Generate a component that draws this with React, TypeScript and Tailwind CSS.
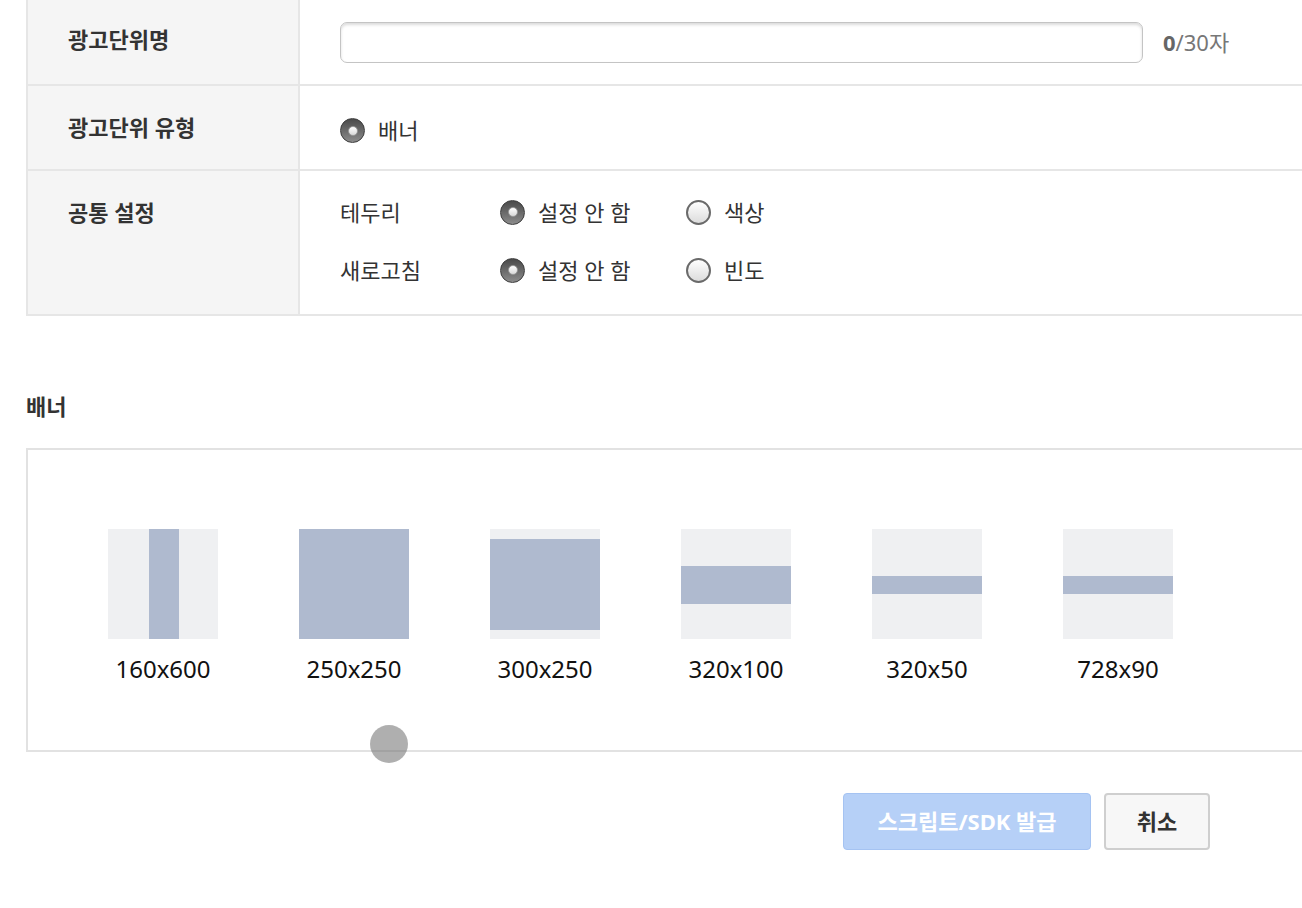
import React from 'react';

const FONT = "font-['Noto_Sans','Noto_Sans_CJK_KR',sans-serif]";

type Size = { label: string; w: number; h: number; x: number; y: number };

// thumbnail geometry inside a 110x110 box
const sizes: Size[] = [
  { label: '160x600', w: 30, h: 110, x: 41, y: 0 },
  { label: '250x250', w: 110, h: 110, x: 0, y: 0 },
  { label: '300x250', w: 110, h: 91, x: 0, y: 10 },
  { label: '320x100', w: 110, h: 38, x: 0, y: 37 },
  { label: '320x50', w: 110, h: 18, x: 0, y: 47 },
  { label: '728x90', w: 110, h: 18, x: 0, y: 47 },
];

function Radio({ checked }: { checked: boolean }) {
  if (checked) {
    return (
      <span className="flex h-[25px] w-[25px] shrink-0 items-center justify-center rounded-full border border-[#3c3c3c] bg-gradient-to-b from-[#4a4a4a] to-[#8c8c8c]">
        <span className="h-[10px] w-[10px] rounded-full border border-[#9a9a9a] bg-gradient-to-b from-[#ffffff] to-[#d8d8d8]" />
      </span>
    );
  }
  return (
    <span className="h-[25px] w-[25px] shrink-0 rounded-full border-2 border-[#6a6a6a] bg-gradient-to-b from-[#ffffff] to-[#dcdcdc]" />
  );
}

function Option({ checked, label, className }: { checked: boolean; label: string; className?: string }) {
  return (
    <label className={`flex items-center gap-[13px] ${className ?? ''}`}>
      <Radio checked={checked} />
      <span className="text-[22px] text-[#333]">{label}</span>
    </label>
  );
}

function Thumb({ s }: { s: Size }) {
  return (
    <div className="flex w-[110px] flex-col items-center">
      <div className="relative h-[110px] w-[110px] bg-[#eff0f2]">
        <div
          className="absolute bg-[#afbacf]"
          style={{ left: s.x, top: s.y, width: s.w, height: s.h }}
        />
      </div>
      <div className="mt-[16px] whitespace-nowrap text-[24px] leading-[28px] text-[#111]">{s.label}</div>
    </div>
  );
}

export default function App() {
  return (
    <div className={`relative h-[908px] w-[1302px] overflow-hidden bg-white ${FONT}`}>
      {/* settings table */}
      <div className="ml-[26px] w-[1320px] border-l-2 border-[#e6e6e6]">
        <div className="flex h-[86px] border-b-2 border-[#e6e6e6]">
          <div className="w-[272px] shrink-0 border-r-2 border-[#e6e6e6] bg-[#f5f5f5] pl-[40px] pt-[24px] text-[22px] font-bold leading-[30px] text-[#333]">
            광고단위명
          </div>
          <div className="flex items-start pl-[40px] pt-[22px]">
            <div className="h-[41px] w-[803px] rounded-[7px] border border-[#c4c4c4] bg-white shadow-[inset_0_2px_3px_rgba(0,0,0,0.14)]" />
            <div className="ml-[20px] mt-[5px] text-[22px] leading-[30px] text-[#777]">
              <span className="font-bold text-[#666]">0</span>/30자
            </div>
          </div>
        </div>

        <div className="flex h-[85px] border-b-2 border-[#e6e6e6]">
          <div className="w-[272px] shrink-0 border-r-2 border-[#e6e6e6] bg-[#f5f5f5] pl-[40px] pt-[26px] text-[22px] font-bold leading-[30px] text-[#333]">
            광고단위 유형
          </div>
          <div className="flex items-start pl-[40px] pt-[28px]">
            <Option checked label="배너" />
          </div>
        </div>

        <div className="flex h-[145px] border-b-2 border-[#e6e6e6]">
          <div className="w-[272px] shrink-0 border-r-2 border-[#e6e6e6] bg-[#f5f5f5] pl-[40px] pt-[26px] text-[22px] font-bold leading-[30px] text-[#333]">
            공통 설정
          </div>
          <div className="flex flex-col gap-[28px] pl-[40px] pt-[26px]">
            <div className="flex h-[30px] items-center">
              <span className="w-[160px] text-[22px] text-[#333]">테두리</span>
              <Option checked label="설정 안 함" className="w-[186px]" />
              <Option checked={false} label="색상" />
            </div>
            <div className="flex h-[30px] items-center">
              <span className="w-[160px] text-[22px] text-[#333]">새로고침</span>
              <Option checked label="설정 안 함" className="w-[186px]" />
              <Option checked={false} label="빈도" />
            </div>
          </div>
        </div>
      </div>

      {/* banner section */}
      <div className="ml-[26px] mt-[75px] text-[22px] font-bold leading-[30px] text-[#333]">배너</div>

      <div className="ml-[26px] mt-[27px] h-[304px] w-[1320px] border-2 border-[#e2e2e2] pl-[80px] pt-[79px]">
        <div className="flex gap-[81px]">
          {sizes.map(s => (
            <Thumb key={s.label} s={s} />
          ))}
        </div>
      </div>

      {/* actions */}
      <div className="mt-[41px] flex justify-end gap-[13px] pr-[92px]">
        <button className="h-[57px] w-[248px] rounded-[4px] border border-[#a5c3f2] bg-[#b6d0f7] text-[22px] font-bold text-white">
          스크립트/SDK 발급
        </button>
        <button className="h-[57px] w-[106px] rounded-[4px] border-2 border-[#cfcfcf] bg-[#f7f7f7] text-[22px] font-bold text-[#333]">
          취소
        </button>
      </div>

      {/* touch indicator */}
      <div className="absolute left-[370px] top-[725px] h-[38px] w-[38px] rounded-full bg-[rgba(110,110,110,0.55)]" />
    </div>
  );
}
